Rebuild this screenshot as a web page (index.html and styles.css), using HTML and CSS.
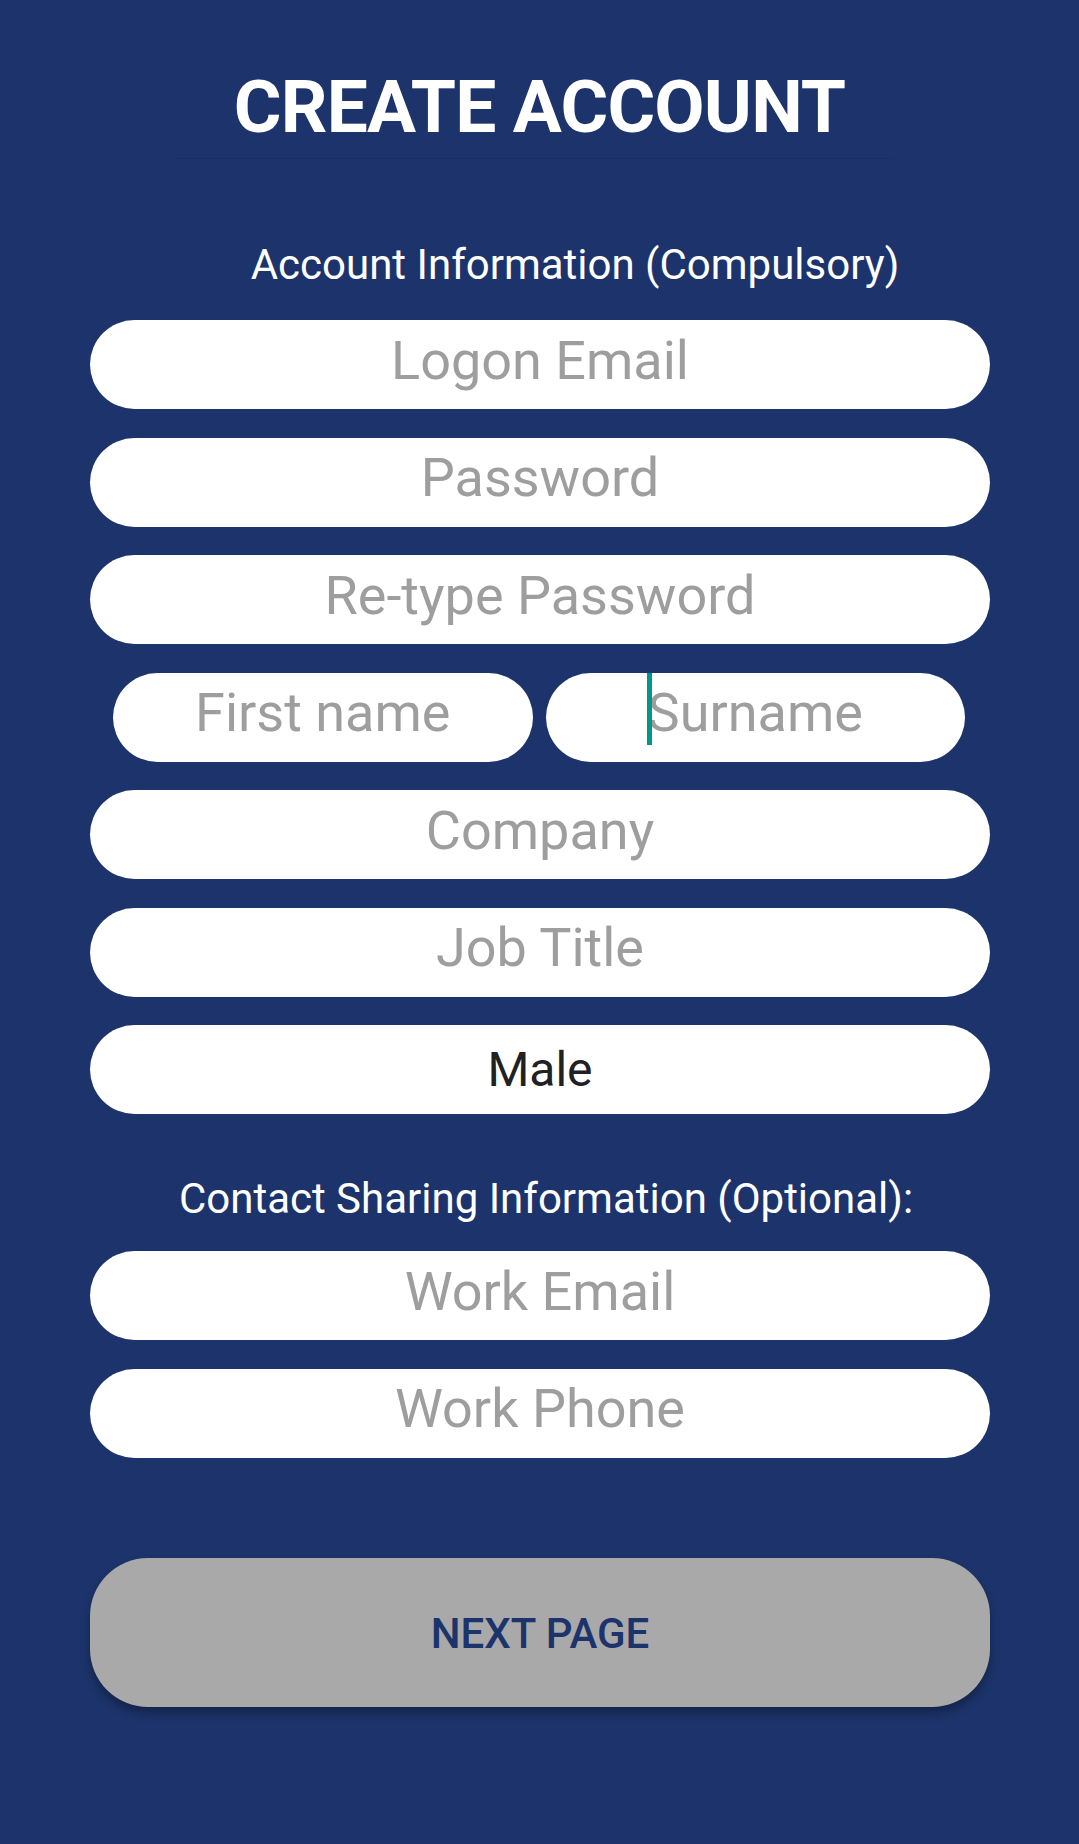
FILE: index.html
```html
<!DOCTYPE html>
<html lang="en">
<head>
<meta charset="utf-8">
<title>Create Account</title>
<link rel="stylesheet" href="styles.css">
</head>
<body>
<main class="page">
  <header class="header">
    <h1 class="title">CREATE ACCOUNT</h1>
    <div class="title-rule"></div>
  </header>

  <form class="form">
    <p class="section-label section-label--account">Account Information (Compulsory)</p>
    <div class="fields fields--account">
      <input class="field" type="email" placeholder="Logon Email">
      <input class="field" type="password" placeholder="Password">
      <input class="field" type="password" placeholder="Re-type Password">
      <div class="name-row">
        <div class="field-wrap">
          <input class="field" type="text" placeholder="First name">
        </div>
        <div class="field-wrap">
          <input class="field" type="text" placeholder="Surname">
          <span class="caret"></span>
        </div>
      </div>
      <input class="field" type="text" placeholder="Company">
      <input class="field" type="text" placeholder="Job Title">
      <div class="field field--select">Male</div>
    </div>

    <p class="section-label section-label--contact">Contact Sharing Information (Optional):</p>
    <div class="fields fields--contact">
      <input class="field" type="email" placeholder="Work Email">
      <input class="field" type="tel" placeholder="Work Phone">
    </div>

    <button class="next-btn" type="button">NEXT PAGE</button>
  </form>
</main>
</body>
</html>
```

FILE: styles.css
```css
* {
  box-sizing: border-box;
}

html, body {
  margin: 0;
  padding: 0;
}

body {
  background: #1c346b;
  font-family: Roboto, "Noto Sans", sans-serif;
  width: 1079px;
  min-height: 1844px;
}

.page {
  display: flex;
  flex-direction: column;
}

.header {
  display: flex;
  flex-direction: column;
  align-items: center;
  padding-top: 70px;
}

.title {
  margin: 0;
  color: #ffffff;
  font-size: 73px;
  line-height: 74px;
  font-weight: 700;
  letter-spacing: -0.8px;
  text-align: center;
}

.title-rule {
  align-self: stretch;
  height: 1px;
  margin: 14px 186px 0 176px;
  background: rgba(0, 0, 0, 0.07);
}

.form {
  display: flex;
  flex-direction: column;
  padding: 0 89px 0 90px;
}

.section-label {
  margin: 0;
  color: #ffffff;
  font-size: 42px;
  line-height: 40px;
  font-weight: 400;
  text-align: center;
}

.section-label--account {
  margin-top: 86px;
  padding-left: 70px;
}

.section-label--contact {
  margin-top: 65px;
  padding-left: 12px;
}

.fields {
  display: flex;
  flex-direction: column;
  gap: 28.5px;
}

.fields--account {
  margin-top: 35px;
}

.fields--contact {
  margin-top: 32px;
}

.field {
  display: block;
  width: 100%;
  height: 89px;
  border: none;
  border-radius: 44.5px;
  background: #ffffff;
  padding: 0 20px 9px;
  margin: 0;
  font-family: Roboto, "Noto Sans", sans-serif;
  font-size: 54px;
  line-height: 54px;
  color: #212121;
  text-align: center;
  outline: none;
}

.field::placeholder {
  color: #9e9e9e;
  opacity: 1;
}

.field--select {
  display: flex;
  align-items: center;
  justify-content: center;
  padding: 0 20px;
  font-size: 48px;
  color: #212121;
}

.name-row {
  display: flex;
  gap: 13px;
  padding: 0 25px 0 23px;
}

.field-wrap {
  position: relative;
  flex: 1 1 0;
  min-width: 0;
}

.caret {
  position: absolute;
  left: 101px;
  top: 0;
  width: 5px;
  height: 72px;
  background: #009688;
}

.next-btn {
  margin-top: 100.5px;
  height: 149px;
  width: 100%;
  border: none;
  border-radius: 58px;
  background: #a9a9a9;
  color: #1c346b;
  font-family: Roboto, "Noto Sans", sans-serif;
  font-size: 42px;
  line-height: 42px;
  font-weight: 500;
  padding-top: 3px;
  box-shadow: 0 6px 10px rgba(0, 0, 0, 0.3);
  cursor: pointer;
}
```
